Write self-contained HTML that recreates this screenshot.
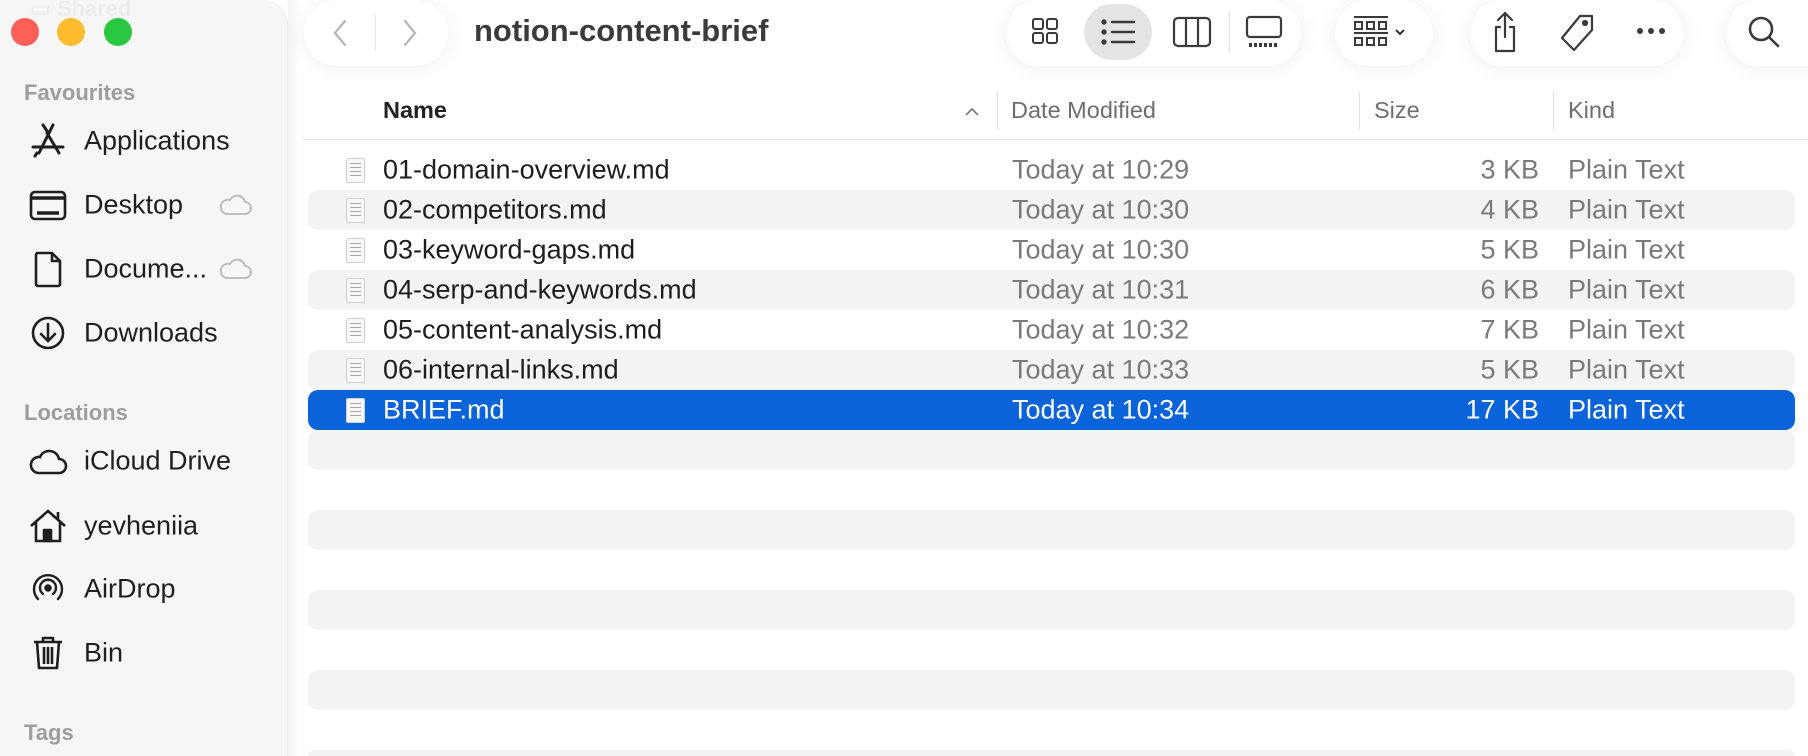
<!DOCTYPE html>
<html style="height:756px;overflow:hidden"><head><meta charset="utf-8"><style>
*{margin:0;padding:0;box-sizing:border-box}
body{width:1808px;height:756px;overflow:hidden;background:#fff;font-family:"Liberation Sans",sans-serif;position:relative;color:#1e1e1e}
.sb{position:absolute;left:0;top:0;width:288px;height:756px;background:#f6f6f6;border-right:1px solid #ededed;border-radius:0 24px 0 0}
.strip{position:absolute;left:288px;top:0;width:12px;height:756px;background:linear-gradient(90deg,#f3f3f3,#fff)}
.dot{position:absolute;top:18px;width:28px;height:28px;border-radius:50%}
.sh{position:absolute;left:24px;font-size:22px;font-weight:bold;color:#9d9d9d}
.it{position:absolute;left:84px;font-size:27px;color:#1f1f1f;transform:translateY(-50%)}
.ic{position:absolute;left:28px;width:40px;height:40px;transform:translateY(-50%)}
.pill{position:absolute;top:0;height:66px;background:#fff;border-radius:33px;box-shadow:0 2px 24px rgba(0,0,0,0.07)}
.title{position:absolute;left:474px;top:13px;font-size:31px;font-weight:bold;color:#3b3b3b}
.hd{position:absolute;top:97px;font-size:23.5px;color:#6e6e6e}
.div{position:absolute;top:92px;width:1px;height:38px;background:#e2e2e2}
.row{position:absolute;left:308px;width:1487px;height:40px;border-radius:10px}
.g{background:#f3f3f3}
.sel{background:#0a63d9}
.c{position:absolute;top:50%;transform:translateY(-50%);font-size:27px;white-space:nowrap}
.n{left:75px;color:#1e1e1e}
.d{left:704px;color:#7a7a7a}
.s{right:256px;color:#7a7a7a}
.k{left:1260px;color:#7a7a7a}
.sel .c{color:#fff}
.fi{position:absolute;left:38px;top:8px;width:19px;height:25px;background:#f8f8f8;border:1px solid #cfcfcf;border-radius:2px}
.fi:after{content:"";position:absolute;left:3px;top:4px;width:11px;height:15px;background:repeating-linear-gradient(#aaa 0 1px,transparent 1px 4px)}
</style></head><body>
<div class="sb"></div><div class="strip"></div>
<div style="position:absolute;left:30px;top:-4px;font-size:22px;color:#ececec;font-weight:bold">▭ Shared</div>
<div class="dot" style="left:11px;background:#fe5f57"></div>
<div class="dot" style="left:57px;background:#febc2e"></div>
<div class="dot" style="left:104px;background:#28c840"></div>
<div class="sh" style="top:80px">Favourites</div>
<div class="sh" style="top:400px">Locations</div>
<div class="sh" style="top:720px">Tags</div>

<svg class="ic" style="top:141px" viewBox="0 0 40 40" fill="none" stroke="#1f1f1f" stroke-width="3" stroke-linecap="round"><path d="M15 4l4 6M25 4L11 32M19 12l12 20M5 26h30M9 32l-2 3"/></svg>
<div class="it" style="top:141px">Applications</div>
<svg class="ic" style="top:205px" viewBox="0 0 40 40" fill="none" stroke="#1f1f1f" stroke-width="2.6"><rect x="3" y="7" width="34" height="27" rx="4"/><path d="M3 13h34M9 28h22" stroke-width="3.5"/></svg>
<div class="it" style="top:205px">Desktop</div>
<svg style="position:absolute;left:218px;top:194px" width="34" height="22" viewBox="0 0 34 22" fill="none" stroke="#b8b8b8" stroke-width="1.8"><path d="M8 20h19a6 6 0 0 0 0-12 8 8 0 0 0-15-2 7 7 0 0 0-4 14z"/></svg>
<div class="it" style="top:269px">Docume...</div>
<svg class="ic" style="top:269px" viewBox="0 0 40 40" fill="none" stroke="#1f1f1f" stroke-width="2.6" stroke-linejoin="round"><path d="M9 4h15l8 8v23a2 2 0 0 1-2 2H10a2 2 0 0 1-2-2V6a2 2 0 0 1 2-2zM24 4v8h8"/></svg>
<svg style="position:absolute;left:218px;top:258px" width="34" height="22" viewBox="0 0 34 22" fill="none" stroke="#b8b8b8" stroke-width="1.8"><path d="M8 20h19a6 6 0 0 0 0-12 8 8 0 0 0-15-2 7 7 0 0 0-4 14z"/></svg>
<svg class="ic" style="top:333px" viewBox="0 0 40 40" fill="none" stroke="#1f1f1f" stroke-width="2.6" stroke-linecap="round"><circle cx="20" cy="20" r="15"/><path d="M20 11v17M13 21l7 7 7-7"/></svg>
<div class="it" style="top:333px">Downloads</div>
<svg class="ic" style="top:461px" viewBox="0 0 40 40" fill="none" stroke="#1f1f1f" stroke-width="2.6"><path d="M10 32h21a7 7 0 0 0 0-14 10 10 0 0 0-19-2 8 8 0 0 0-2 16z"/></svg>
<div class="it" style="top:461px">iCloud Drive</div>
<svg class="ic" style="top:526px" viewBox="0 0 40 40" fill="none" stroke="#1f1f1f" stroke-width="2.6" stroke-linejoin="round"><path d="M3 20L20 5l17 15M8 16v19h24V16M30 6v7"/><rect x="16" y="24" width="7" height="11" fill="#1f1f1f"/></svg>
<div class="it" style="top:526px">yevheniia</div>
<svg class="ic" style="top:589px" viewBox="0 0 40 40" fill="none" stroke="#1f1f1f" stroke-width="2.4" stroke-linecap="round"><circle cx="20" cy="19" r="2.5" fill="#1f1f1f"/><path d="M15 25a8 8 0 1 1 10 0M10 30a14 14 0 1 1 20 0"/></svg>
<div class="it" style="top:589px">AirDrop</div>
<svg class="ic" style="top:653px" viewBox="0 0 40 40" fill="none" stroke="#1f1f1f" stroke-width="2.6" stroke-linejoin="round"><path d="M6 9h28M15 9V5h10v4M9 9l2 26h18l2-26M16 14v17M20 14v17M24 14v17"/></svg>
<div class="it" style="top:653px">Bin</div>

<div class="pill" style="left:304px;width:144px"></div>
<div style="position:absolute;left:375px;top:15px;width:1px;height:36px;background:#e5e5e5"></div>
<svg style="position:absolute;left:330px;top:18px" width="20" height="30" viewBox="0 0 20 30" fill="none" stroke="#b5b5b5" stroke-width="2.2" stroke-linecap="round"><path d="M15 3L5 15l10 12"/></svg>
<svg style="position:absolute;left:400px;top:18px" width="20" height="30" viewBox="0 0 20 30" fill="none" stroke="#b5b5b5" stroke-width="2.2" stroke-linecap="round"><path d="M5 3l10 12L5 27"/></svg>
<div class="title">notion-content-brief</div>

<div class="pill" style="left:1006px;width:295px"></div>
<div style="position:absolute;left:1084px;top:4px;width:68px;height:56px;border-radius:28px;background:#e4e4e4"></div>
<svg style="position:absolute;left:1030px;top:16px" width="32" height="32" viewBox="0 0 32 32" fill="none" stroke="#3a3a3a" stroke-width="2"><rect x="3" y="3" width="10" height="10" rx="2"/><rect x="17" y="3" width="10" height="10" rx="2"/><rect x="3" y="17" width="10" height="10" rx="2"/><rect x="17" y="17" width="10" height="10" rx="2"/></svg>
<svg style="position:absolute;left:1100px;top:16px" width="38" height="32" viewBox="0 0 38 32" fill="none" stroke="#3a3a3a" stroke-width="2.4" stroke-linecap="round"><path d="M12 6h22M12 16h22M12 26h22"/><circle cx="4" cy="6" r="1.5" fill="#3a3a3a"/><circle cx="4" cy="16" r="1.5" fill="#3a3a3a"/><circle cx="4" cy="26" r="1.5" fill="#3a3a3a"/></svg>
<svg style="position:absolute;left:1172px;top:14px" width="40" height="36" viewBox="0 0 40 36" fill="none" stroke="#3a3a3a" stroke-width="2.2"><rect x="2" y="4" width="36" height="28" rx="4"/><path d="M14 4v28M26 4v28"/></svg>
<div style="position:absolute;left:1229px;top:12px;width:1px;height:40px;background:#e0e0e0"></div>
<svg style="position:absolute;left:1244px;top:14px" width="40" height="36" viewBox="0 0 40 36" fill="none" stroke="#3a3a3a" stroke-width="2.2"><rect x="3" y="3" width="34" height="20" rx="3"/><path d="M5 31h30" stroke-dasharray="3 2" stroke-width="4"/></svg>

<div class="pill" style="left:1335px;width:98px"></div>
<svg style="position:absolute;left:1352px;top:14px" width="64" height="36" viewBox="0 0 64 36" fill="none" stroke="#3a3a3a" stroke-width="2"><path d="M2 3h34M2 19h34"/><rect x="3" y="8" width="7" height="7"/><rect x="15" y="8" width="7" height="7"/><rect x="27" y="8" width="7" height="7"/><rect x="3" y="24" width="7" height="7"/><rect x="15" y="24" width="7" height="7"/><rect x="27" y="24" width="7" height="7"/><path d="M44 16l4 4 4-4" stroke-width="2.2"/></svg>

<div class="pill" style="left:1470px;width:213px"></div>
<svg style="position:absolute;left:1490px;top:10px" width="30" height="44" viewBox="0 0 30 44" fill="none" stroke="#3a3a3a" stroke-width="2.2" stroke-linecap="round" stroke-linejoin="round"><path d="M15 3v24M8 10l7-7 7 7M10 17H6v24h18V17h-4"/></svg>
<svg style="position:absolute;left:1558px;top:12px" width="40" height="42" viewBox="0 0 40 42" fill="none" stroke="#3a3a3a" stroke-width="2.2" stroke-linejoin="round"><path d="M22 4h12v14L16 38 4 26z"/><circle cx="27" cy="11" r="2" fill="#3a3a3a"/></svg>
<svg style="position:absolute;left:1636px;top:26px" width="30" height="10" viewBox="0 0 30 10" fill="#3a3a3a"><circle cx="4" cy="5" r="3"/><circle cx="15" cy="5" r="3"/><circle cx="26" cy="5" r="3"/></svg>

<div class="pill" style="left:1726px;width:110px"></div>
<svg style="position:absolute;left:1746px;top:14px" width="36" height="36" viewBox="0 0 36 36" fill="none" stroke="#3a3a3a" stroke-width="2.6" stroke-linecap="round"><circle cx="15" cy="15" r="11"/><path d="M23 23l9 9"/></svg>

<div class="hd" style="left:383px;color:#222;font-weight:bold">Name</div>
<svg style="position:absolute;left:964px;top:106px" width="16" height="12" viewBox="0 0 16 12" fill="none" stroke="#777" stroke-width="1.6"><path d="M2 9l6-6 6 6"/></svg>
<div class="div" style="left:997px"></div><div class="div" style="left:1359px"></div><div class="div" style="left:1553px"></div>
<div class="hd" style="left:1011px">Date Modified</div>
<div class="hd" style="left:1374px">Size</div>
<div class="hd" style="left:1568px">Kind</div>
<div style="position:absolute;left:302px;top:139px;width:1506px;height:1px;background:#e3e3e3"></div>

<div class="row" style="top:150px"><div class="fi"></div><div class="c n">01-domain-overview.md</div><div class="c d">Today at 10:29</div><div class="c s">3 KB</div><div class="c k">Plain Text</div></div>
<div class="row g" style="top:190px"><div class="fi"></div><div class="c n">02-competitors.md</div><div class="c d">Today at 10:30</div><div class="c s">4 KB</div><div class="c k">Plain Text</div></div>
<div class="row" style="top:230px"><div class="fi"></div><div class="c n">03-keyword-gaps.md</div><div class="c d">Today at 10:30</div><div class="c s">5 KB</div><div class="c k">Plain Text</div></div>
<div class="row g" style="top:270px"><div class="fi"></div><div class="c n">04-serp-and-keywords.md</div><div class="c d">Today at 10:31</div><div class="c s">6 KB</div><div class="c k">Plain Text</div></div>
<div class="row" style="top:310px"><div class="fi"></div><div class="c n">05-content-analysis.md</div><div class="c d">Today at 10:32</div><div class="c s">7 KB</div><div class="c k">Plain Text</div></div>
<div class="row g" style="top:350px"><div class="fi"></div><div class="c n">06-internal-links.md</div><div class="c d">Today at 10:33</div><div class="c s">5 KB</div><div class="c k">Plain Text</div></div>
<div class="row sel" style="top:390px"><div class="fi"></div><div class="c n">BRIEF.md</div><div class="c d">Today at 10:34</div><div class="c s">17 KB</div><div class="c k">Plain Text</div></div>
<div class="row g" style="top:430px"></div>
<div class="row g" style="top:510px"></div>
<div class="row g" style="top:590px"></div>
<div class="row g" style="top:670px"></div>
<div class="row g" style="top:750px;height:6px;border-radius:10px 10px 0 0"></div>
</body></html>
